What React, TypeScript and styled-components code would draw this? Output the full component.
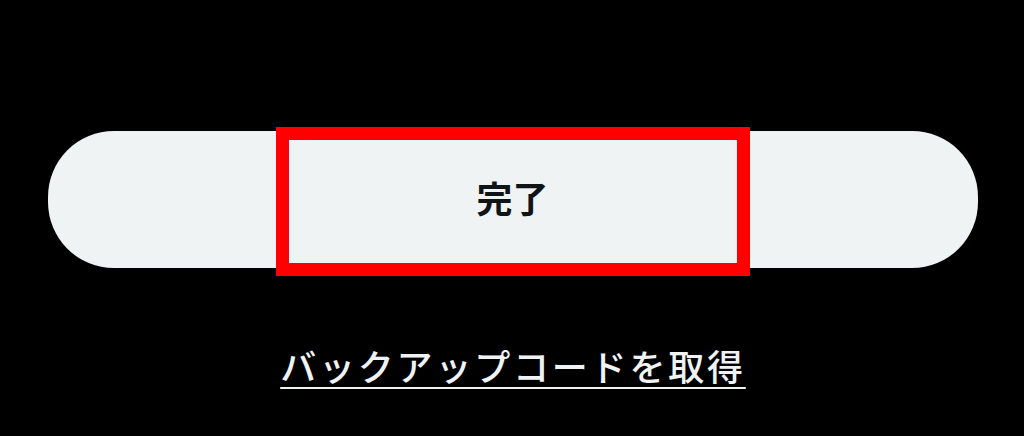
import React from "react";
import styled, { createGlobalStyle } from "styled-components";

const GlobalStyle = createGlobalStyle`
  html, body {
    margin: 0;
    padding: 0;
    background: #000;
  }
  body {
    font-family: "Noto Sans CJK JP", "Noto Sans", sans-serif;
  }
`;

const Screen = styled.div`
  width: 1024px;
  height: 436px;
  background: #000;
  display: flex;
  flex-direction: column;
  align-items: center;
  padding-top: 131px;
  box-sizing: border-box;
`;

const PillButton = styled.button`
  position: relative;
  width: 930px;
  height: 137px;
  margin-left: 1px;
  border: none;
  border-radius: 66px;
  background: #eff3f4;
  color: #0f1419;
  font-family: "Noto Sans CJK JP", sans-serif;
  font-size: 36px;
  font-weight: 700;
  display: flex;
  align-items: center;
  justify-content: center;
  padding: 0 0 6px 0;
  cursor: pointer;
`;

const Highlight = styled.span`
  position: absolute;
  left: 228px;
  top: -4px;
  width: 474px;
  height: 149px;
  border: 13px solid #ff0000;
  box-sizing: border-box;
  pointer-events: none;
`;

const TextLink = styled.a`
  margin-top: 78px;
  margin-left: 2px;
  color: #eff3f4;
  font-family: "Noto Sans CJK JP", sans-serif;
  font-size: 36px;
  font-weight: 500;
  letter-spacing: 2.8px;
  line-height: 1.1;
  text-decoration: underline;
  text-decoration-thickness: 2px;
  text-underline-offset: 6px;
  cursor: pointer;
`;

export default function App() {
  return (
    <>
      <GlobalStyle />
      <Screen>
        <PillButton>
          完了
          <Highlight />
        </PillButton>
        <TextLink>バックアップコードを取得</TextLink>
      </Screen>
    </>
  );
}
